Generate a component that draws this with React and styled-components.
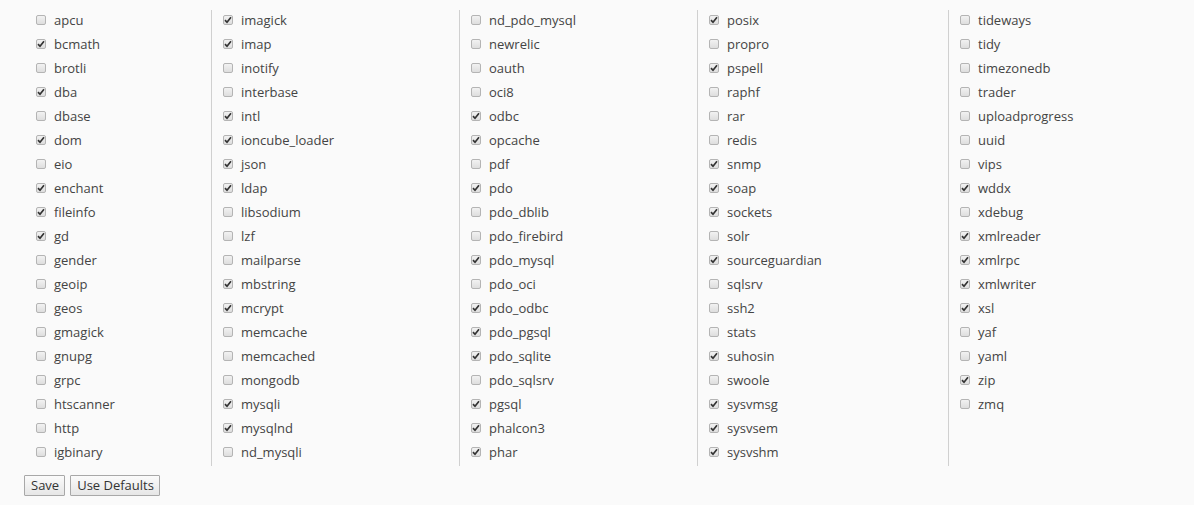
import React from 'react';
import styled, { createGlobalStyle } from 'styled-components';

const GlobalStyle = createGlobalStyle`
  html, body {
    margin: 0;
    padding: 0;
    background: #fafafa;
  }
  body {
    font-family: "Open Sans", "Liberation Sans", sans-serif;
    font-size: 13px;
    color: #444;
  }
`;

const columns = [
  [['apcu'], ['bcmath', 1], ['brotli'], ['dba', 1], ['dbase'], ['dom', 1], ['eio'], ['enchant', 1], ['fileinfo', 1], ['gd', 1], ['gender'], ['geoip'], ['geos'], ['gmagick'], ['gnupg'], ['grpc'], ['htscanner'], ['http'], ['igbinary']],
  [['imagick', 1], ['imap', 1], ['inotify'], ['interbase'], ['intl', 1], ['ioncube_loader', 1], ['json', 1], ['ldap', 1], ['libsodium'], ['lzf'], ['mailparse'], ['mbstring', 1], ['mcrypt', 1], ['memcache'], ['memcached'], ['mongodb'], ['mysqli', 1], ['mysqlnd', 1], ['nd_mysqli']],
  [['nd_pdo_mysql'], ['newrelic'], ['oauth'], ['oci8'], ['odbc', 1], ['opcache', 1], ['pdf'], ['pdo', 1], ['pdo_dblib'], ['pdo_firebird'], ['pdo_mysql', 1], ['pdo_oci'], ['pdo_odbc', 1], ['pdo_pgsql', 1], ['pdo_sqlite', 1], ['pdo_sqlsrv'], ['pgsql', 1], ['phalcon3', 1], ['phar', 1]],
  [['posix', 1], ['propro'], ['pspell', 1], ['raphf'], ['rar'], ['redis'], ['snmp', 1], ['soap', 1], ['sockets', 1], ['solr'], ['sourceguardian', 1], ['sqlsrv'], ['ssh2'], ['stats'], ['suhosin', 1], ['swoole'], ['sysvmsg', 1], ['sysvsem', 1], ['sysvshm', 1]],
  [['tideways'], ['tidy'], ['timezonedb'], ['trader'], ['uploadprogress'], ['uuid'], ['vips'], ['wddx', 1], ['xdebug'], ['xmlreader', 1], ['xmlrpc', 1], ['xmlwriter', 1], ['xsl', 1], ['yaf'], ['yaml'], ['zip', 1], ['zmq']],
];

const Page = styled.div`
  padding: 8px 0 0 24px;
`;

const Grid = styled.div`
  display: grid;
  grid-template-columns: 187px 248px 238px 251px 1fr;
`;

const Column = styled.div`
  height: 456px;
  border-left: ${p => (p.first ? 'none' : '1px solid #d0d0d0')};
  padding-left: ${p => (p.first ? '12px' : '11px')};
  margin-top: 2px;
`;

const List = styled.div`
  margin-top: -2px;
`;

const Row = styled.label`
  display: flex;
  align-items: center;
  height: 24px;
  line-height: 24px;
  white-space: nowrap;
`;

const Box = styled.span`
  box-sizing: border-box;
  width: 10px;
  height: 10px;
  margin-right: 8px;
  margin-top: -1px;
  border: 1px solid #b4b4b4;
  border-radius: 2px;
  background: linear-gradient(#f2f2f2, #dedede);
  display: flex;
  align-items: center;
  justify-content: center;
  flex: none;
`;

const Buttons = styled.div`
  display: flex;
  gap: 5px;
  margin-top: 9px;
`;

const Button = styled.button`
  height: 21px;
  padding: 0 5px 0 6px;
  font-family: "Open Sans", "Liberation Sans", sans-serif;
  font-size: 13px;
  color: #333;
  border: 1px solid #a8a8a8;
  border-radius: 1px;
  background: linear-gradient(#fbfbfb, #e6e6e6);
  line-height: 19px;
`;

const Check = () => (
  <svg width="8" height="8" viewBox="0 0 8 8">
    <path d="M1 4.2 L3 6.3 L7 1.3" fill="none" stroke="#333" strokeWidth="1.7" />
  </svg>
);

const Item = ({ name, on }) => (
  <Row>
    <Box>{on ? <Check /> : null}</Box>
    {name}
  </Row>
);

export default function App() {
  return (
    <>
      <GlobalStyle />
      <Page>
        <Grid>
          {columns.map((col, i) => (
            <Column key={i} first={i === 0}>
              <List>
                {col.map(([name, on]) => (
                  <Item key={name} name={name} on={on} />
                ))}
              </List>
            </Column>
          ))}
        </Grid>
        <Buttons>
          <Button>Save</Button>
          <Button>Use Defaults</Button>
        </Buttons>
      </Page>
    </>
  );
}
